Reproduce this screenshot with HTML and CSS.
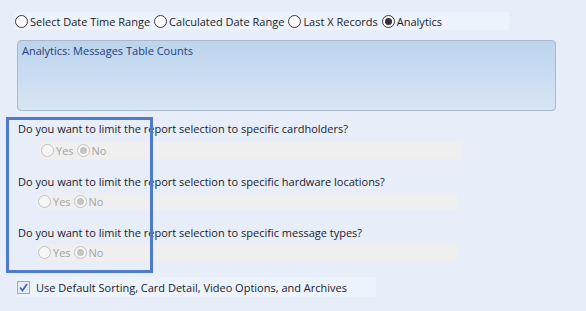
FILE: index.html
```html
<!DOCTYPE html>
<html lang="en">
<head>
  <meta charset="UTF-8" />
  <title>Report Options</title>
  <link rel="stylesheet" href="styles.css">
</head>
<body>

  <!-- Report type selector -->
  <div class="mode-row">
    <label class="opt"><span class="radio"></span>Select Date Time Range</label>
    <label class="opt"><span class="radio"></span>Calculated Date Range</label>
    <label class="opt"><span class="radio"></span>Last X Records</label>
    <label class="opt"><span class="radio checked"></span>Analytics</label>
  </div>

  <div class="desc">Analytics: Messages Table Counts</div>

  <!-- Limit questions -->
  <div class="questions">
    <div class="question">
      <p>Do you want to limit the report selection to specific cardholders?</p>
      <div class="answers first">
        <label class="opt off"><span class="radio"></span>Yes</label>
        <label class="opt off"><span class="radio checked"></span>No</label>
      </div>
    </div>
    <div class="question">
      <p>Do you want to limit the report selection to specific hardware locations?</p>
      <div class="answers">
        <label class="opt off"><span class="radio"></span>Yes</label>
        <label class="opt off"><span class="radio checked"></span>No</label>
      </div>
    </div>
    <div class="question">
      <p>Do you want to limit the report selection to specific message types?</p>
      <div class="answers">
        <label class="opt off"><span class="radio"></span>Yes</label>
        <label class="opt off"><span class="radio checked"></span>No</label>
      </div>
    </div>
    <div class="highlight"></div>
  </div>

  <div class="check-row">
    <span class="check">
      <svg width="9" height="9" viewBox="0 0 9 9"><path d="M1 4.5 L3.5 7.5 L8 1" fill="none" stroke="#4a66a8" stroke-width="1.8"/></svg>
    </span>
    Use Default Sorting, Card Detail, Video Options, and Archives
  </div>

</body>
</html>
```

FILE: styles.css
```css
* {
  margin: 0;
  padding: 0;
  box-sizing: border-box;
}

body {
  background: #e7eef9;
  color: #1a1a2a;
  font-family: "Open Sans", sans-serif;
  font-size: 11px;
  line-height: 15px;
  width: 586px;
  height: 311px;
  overflow: hidden;
  padding-top: 12px;
}

.mode-row {
  display: flex;
  align-items: center;
  gap: 4px;
  margin-left: 15px;
  width: 494px;
  height: 18px;
  background: #edf3fc;
}

.opt {
  display: flex;
  align-items: center;
  gap: 2px;
  white-space: nowrap;
}

.radio {
  width: 13px;
  height: 13px;
  border: 1px solid #3a3a3a;
  border-radius: 50%;
  background: #fff;
  position: relative;
}

.radio.checked::after {
  content: "";
  position: absolute;
  left: 2px;
  top: 2px;
  width: 7px;
  height: 7px;
  border-radius: 50%;
  background: #333;
}

.desc {
  margin: 10px 0 0 17px;
  width: 539px;
  height: 71px;
  border: 1px solid #a9b8ca;
  border-radius: 4px;
  background: linear-gradient(#bcd4ee, #d7e5f3);
  color: #23407a;
  padding: 2px 4px;
}

.questions {
  position: relative;
  margin-top: 10px;
}

.question p {
  padding-left: 18px;
  height: 15px;
}

.answers {
  display: flex;
  align-items: center;
  gap: 3px;
  margin: 4px 0 0 37px;
  width: 420px;
  height: 17px;
  padding-left: 1px;
  background: #efefef;
  color: #a3a3a3;
}

.answers.first {
  margin: 6px 0 0 40px;
  width: 422px;
}

.question + .question {
  margin-top: 15px;
}

.opt.off .radio {
  border-color: #c2c2c2;
  background: #f6f6f6;
}

.opt.off .radio.checked::after {
  background: #c4c4c4;
}

.highlight {
  position: absolute;
  left: 6px;
  top: -4px;
  width: 147px;
  height: 156px;
  border: 3px solid #4f7bcc;
}

.check-row {
  display: flex;
  align-items: center;
  gap: 6px;
  margin: 16px 0 0 16px;
  width: 360px;
  height: 20px;
  background: #edf3fc;
  padding-left: 1px;
}

.check {
  width: 13px;
  height: 13px;
  border: 1px solid #9aa8bb;
  background: #e4ecf6;
  display: flex;
  align-items: center;
  justify-content: center;
}
```
